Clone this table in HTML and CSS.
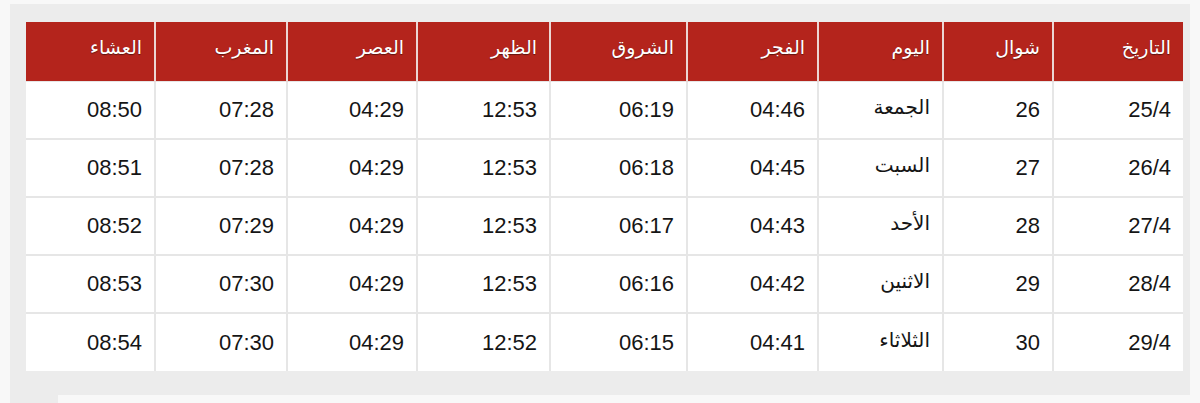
FILE: index.html
```html
<!DOCTYPE html>
<html lang="ar">
<head>
<meta charset="utf-8">
<title>مواقيت الصلاة</title>
<link rel="stylesheet" href="styles.css">
</head>
<body>
<div class="panel">
  <table class="times" dir="rtl">
    <colgroup>
      <col class="c-date"><col class="c-hijri"><col class="c-day"><col class="c-fajr"><col class="c-shuruq"><col class="c-dhuhr"><col class="c-asr"><col class="c-maghrib"><col class="c-isha">
    </colgroup>
    <thead>
      <tr>
        <th>التاريخ</th><th>شوال</th><th>اليوم</th><th>الفجر</th><th>الشروق</th><th>الظهر</th><th>العصر</th><th>المغرب</th><th>العشاء</th>
      </tr>
    </thead>
    <tbody>
      <tr><td>25/4</td><td>26</td><td class="day">الجمعة</td><td>04:46</td><td>06:19</td><td>12:53</td><td>04:29</td><td>07:28</td><td>08:50</td></tr>
      <tr><td>26/4</td><td>27</td><td class="day">السبت</td><td>04:45</td><td>06:18</td><td>12:53</td><td>04:29</td><td>07:28</td><td>08:51</td></tr>
      <tr><td>27/4</td><td>28</td><td class="day">الأحد</td><td>04:43</td><td>06:17</td><td>12:53</td><td>04:29</td><td>07:29</td><td>08:52</td></tr>
      <tr><td>28/4</td><td>29</td><td class="day">الاثنين</td><td>04:42</td><td>06:16</td><td>12:53</td><td>04:29</td><td>07:30</td><td>08:53</td></tr>
      <tr><td>29/4</td><td>30</td><td class="day">الثلاثاء</td><td>04:41</td><td>06:15</td><td>12:52</td><td>04:29</td><td>07:30</td><td>08:54</td></tr>
    </tbody>
  </table>
  <div class="next-card"></div>
</div>
</body>
</html>
```

FILE: styles.css
```css
html, body {
  margin: 0;
  padding: 0;
}
body {
  background: #f8f8f8;
  font-family: "Liberation Sans", "DejaVu Sans", sans-serif;
  height: 403px;
  overflow: hidden;
}
.panel {
  margin: 4px 10px 0 10px;
  padding: 18px 7px 0 16px;
  background: #ececec;
  height: 399px;
  box-sizing: border-box;
}
.times {
  width: 1157px;
  table-layout: fixed;
  border-collapse: collapse;
  background: #ffffff;
}
.c-date { width: 130px; }
.c-hijri { width: 110px; }
.c-day { width: 125px; }
.c-fajr { width: 131px; }
.c-shuruq { width: 137px; }
.c-dhuhr { width: 133px; }
.c-asr { width: 130px; }
.c-maghrib { width: 132px; }
.c-isha { width: 129px; }

.times th {
  background: #b4241c;
  color: #ffffff;
  font-family: "DejaVu Sans", sans-serif;
  font-weight: normal;
  font-size: 19px;
  text-align: right;
  height: 59px;
  padding: 0 12px 8px 12px;
  border-left: 2px solid #ecd6d4;
  text-shadow: 0 1px 1px rgba(0, 0, 0, 0.45);
  box-sizing: border-box;
}
.times th:last-child { border-left: none; }
.times td {
  color: #151515;
  font-size: 22px;
  text-align: right;
  height: 58px;
  padding: 0 12px;
  border: 2px solid #e6e6e6;
  border-top: 1px solid #e6e6e6;
  box-sizing: border-box;
}
.times tr td:first-child { border-right: none; }
.times tr td:last-child { border-left: none; }
.times tbody tr:last-child td { border-bottom: none; }
.times td.day {
  font-family: "DejaVu Sans", sans-serif;
  font-size: 20px;
  padding-bottom: 6px;
}
.next-card {
  margin: 24px -7px 0 32px;
  height: 20px;
  background: #f8f8f8;
}
```
